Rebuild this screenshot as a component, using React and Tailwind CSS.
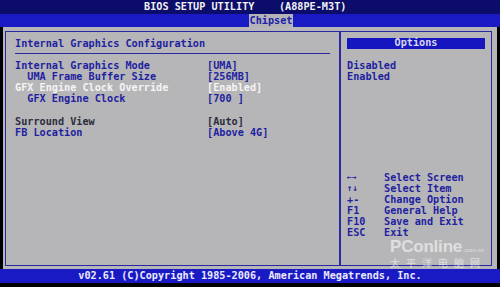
import React from "react";

const mono = { fontFamily: '"DejaVu Sans Mono", "Liberation Mono", monospace' };

export default function App() {
  const blue = "text-[#1f1fa0]";
  return (
    <div className="relative w-[500px] h-[287px] overflow-hidden bg-black flex flex-col text-[10.2px] font-bold" style={mono}>
      {/* title row */}
      <div className="h-[14px] bg-[#0c0c6a] flex items-center pl-[144px] text-[#f2f2f2] whitespace-pre leading-none">
        {"BIOS SETUP UTILITY    (A88PE-M3T)"}
      </div>
      {/* tab row */}
      <div className="h-[13px] bg-[#1a1ac4] flex pl-[249px]">
        <span className="bg-[#b4b4b8] text-[#2020a8] px-[0.5px] leading-[13px]">Chipset</span>
      </div>
      {/* main */}
      <div className="h-[242px] mx-[3px] bg-[#b6b6b8] pt-[4px] pb-[3px] pl-[2px] pr-[5px]">
        <div className="h-full border border-[#2828a0] flex">
          {/* left panel */}
          <div className="w-[335px] border-r-2 border-[#2828a0] pl-[9px] pt-[6px]">
            <div className={`leading-[11px] ${blue}`}>Internal Graphics Configuration</div>
            <div className="mt-[4px] h-px w-[315px] bg-[#2828a0]" />
            <div className="mt-[5.5px] grid grid-cols-[192px_1fr] leading-[11.3px] whitespace-pre">
              <div className={blue}>Internal Graphics Mode</div>
              <div className={blue}>[UMA]</div>
              <div className={blue}>{"  UMA Frame Buffer Size"}</div>
              <div className={blue}>[256MB]</div>
              <div className="text-[#f4f4f4]">GFX Engine Clock Override</div>
              <div className="text-[#f4f4f4]">[Enabled]</div>
              <div className={blue}>{"  GFX Engine Clock"}</div>
              <div className={blue}>[700 ]</div>
              <div className="h-[11.3px]" />
              <div className="h-[11.3px]" />
              <div className="text-[#2c2c3c]">Surround View</div>
              <div className="text-[#2c2c3c]">[Auto]</div>
              <div className={blue}>FB Location</div>
              <div className={blue}>[Above 4G]</div>
            </div>
          </div>
          {/* right panel */}
          <div className="flex-1 pl-[6px] pt-[6px]">
            <div className="w-[138px] h-[11px] bg-[#1616c0] text-[#d6d6f0] flex items-center justify-center leading-none">
              Options
            </div>
            <div className={`mt-[10.5px] leading-[11.3px] ${blue}`}>
              <div>Disabled</div>
              <div>Enabled</div>
            </div>
            <div className={`mt-[89.5px] grid grid-cols-[37px_1fr] leading-[11.1px] ${blue}`}>
              <div className="text-[8px]">←→</div>
              <div>Select Screen</div>
              <div className="text-[9px]">↑↓</div>
              <div>Select Item</div>
              <div>+-</div>
              <div>Change Option</div>
              <div>F1</div>
              <div>General Help</div>
              <div>F10</div>
              <div>Save and Exit</div>
              <div>ESC</div>
              <div>Exit</div>
            </div>
          </div>
        </div>
      </div>
      {/* footer */}
      <div className="h-[14px] bg-[#1a1ac4] flex items-center justify-center text-[#eaeaff] whitespace-pre leading-none">
        {"v02.61 (C)Copyright 1985-2006, American Megatrends, Inc."}
      </div>
      <div className="flex-1 bg-black" />

      {/* watermark */}
      <div className="absolute left-[390px] top-[240px] flex flex-col items-start text-white/55 pointer-events-none" style={{ fontFamily: '"Liberation Sans", Arial, sans-serif' }}>
        <div className="flex items-end h-[14px] leading-[14px]">
          <span className="text-[17px] leading-[14px] font-bold tracking-[-0.2px]">PConline</span>
          <span className="text-[6px] leading-[6px] font-normal ml-[1px] mb-[1px]">.com.cn</span>
        </div>
        <div className="mt-[3px] text-[10px] h-[11px] font-normal tracking-[6px] leading-[11px]" style={{ fontFamily: '"Noto Sans CJK SC", sans-serif' }}>
          太平洋电脑网
        </div>
      </div>
    </div>
  );
}
